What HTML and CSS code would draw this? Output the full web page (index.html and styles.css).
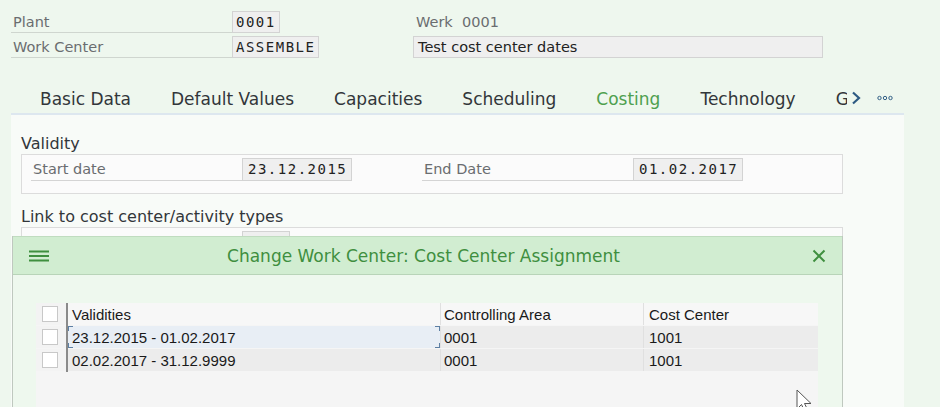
FILE: index.html
```html
<!DOCTYPE html>
<html lang="en">
<head>
    <meta charset="UTF-8">
    <meta name="viewport" content="width=device-width, initial-scale=1.0">
    <title>Work Center - Costing</title>
    <link rel="stylesheet" href="styles.css">
</head>
<body>
    <div class="page">
        <div class="head-grid">
            <div class="label">Plant</div>
            <div class="cell"><span class="field mono">0001</span></div>
            <div class="desc-text">Werk&nbsp; 0001</div>

            <div class="label">Work Center</div>
            <div class="cell"><span class="field mono">ASSEMBLE</span></div>
            <div class="field desc">Test cost center dates</div>
        </div>

        <div class="tabbar">
            <span class="tab">Basic Data</span>
            <span class="tab">Default Values</span>
            <span class="tab">Capacities</span>
            <span class="tab">Scheduling</span>
            <span class="tab active">Costing</span>
            <span class="tab">Technology</span>
            <span class="tab cut">G</span>
            <span class="tab-more">
                <svg width="10" height="14" viewBox="0 0 10 14"><path d="M2 1.5 L8 7 L2 12.5" fill="none" stroke="#2d5a82" stroke-width="2.2"/></svg>
                <svg width="16" height="6" viewBox="0 0 16 6"><circle cx="2.5" cy="3" r="1.7" fill="none" stroke="#346187" stroke-width="1"/><circle cx="8" cy="3" r="1.7" fill="none" stroke="#346187" stroke-width="1"/><circle cx="13.5" cy="3" r="1.7" fill="none" stroke="#346187" stroke-width="1"/></svg>
            </span>
        </div>

        <div class="panel">
            <div class="group-title">Validity</div>
            <div class="group">
                <div class="row">
                    <div class="row-label">Start date</div>
                    <span class="field mono date">23.12.2015</span>
                    <div class="row-label second">End Date</div>
                    <span class="field mono date">01.02.2017</span>
                </div>
            </div>

            <div class="group-title">Link to cost center/activity types</div>
            <div class="group">
                <div class="row">
                    <div class="row-label"></div>
                    <span class="field small"></span>
                </div>
            </div>
        </div>

        <div class="dialog">
            <div class="dialog-head">
                <svg class="burger" width="20" height="14" viewBox="0 0 20 14"><path d="M0 2.5h20M0 7h20M0 11.5h20" stroke="#3f8f3f" stroke-width="2"/></svg>
                <div class="dialog-title">Change Work Center: Cost Center Assignment</div>
                <svg class="close" width="14" height="14" viewBox="0 0 14 14"><path d="M1.5 1.5 L12.5 12.5 M12.5 1.5 L1.5 12.5" stroke="#3f8f3f" stroke-width="2"/></svg>
            </div>
            <div class="dialog-body">
                <table class="grid">
                    <thead>
                        <tr>
                            <th class="sel"><span class="check"></span></th>
                            <th class="c1">Validities</th>
                            <th class="c2">Controlling Area</th>
                            <th class="c3">Cost Center</th>
                        </tr>
                    </thead>
                    <tbody>
                        <tr>
                            <td class="sel"><span class="check"></span></td>
                            <td class="c1 focus">23.12.2015 - 01.02.2017</td>
                            <td class="c2">0001</td>
                            <td class="c3">1001</td>
                        </tr>
                        <tr>
                            <td class="sel"><span class="check"></span></td>
                            <td class="c1">02.02.2017 - 31.12.9999</td>
                            <td class="c2">0001</td>
                            <td class="c3">1001</td>
                        </tr>
                        <tr class="empty">
                            <td colspan="4"></td>
                        </tr>
                    </tbody>
                </table>
            </div>
        </div>

        <svg class="cursor" width="20" height="26" viewBox="0 0 20 26"><path d="M1 1 L1 20 L5.5 15.5 L9 23 L12 21.5 L8.5 14.5 L15 14.5 Z" fill="#fff" stroke="#555" stroke-width="1"/></svg>
    </div>
</body>
</html>
```

FILE: styles.css
```css
html, body {
    margin: 0;
    height: 100%;
    overflow: hidden;
}

body {
    font-family: "DejaVu Sans", "Open Sans", sans-serif;
    background-color: #eef7ee;
    color: #32363a;
}

.page {
    position: relative;
    height: 100%;
    padding-top: 11px;
    box-sizing: border-box;
}

.head-grid {
    display: grid;
    grid-template-columns: 221px 181px 410px;
    grid-auto-rows: 22px;
    row-gap: 3px;
    margin-left: 11px;
}

.label {
    font-size: 14.5px;
    color: #6a6d70;
    padding-left: 2px;
    line-height: 23px;
    border-bottom: 1px solid #cfd6cf;
}

.cell {
    display: flex;
}

.field {
    display: inline-block;
    box-sizing: border-box;
    height: 22px;
    line-height: 20px;
    padding: 0 3px;
    background-color: #efefef;
    border: 1px solid #d3d3d3;
    color: #222;
}

.mono {
    font-family: "DejaVu Sans Mono", monospace;
    font-size: 14px;
    letter-spacing: 1.5px;
}

.desc-text {
    font-size: 14.5px;
    color: #6a6d70;
    padding-left: 3px;
    line-height: 23px;
}

.desc {
    font-size: 14.5px;
    padding-left: 4px;
    line-height: 21px;
    color: #222;
}

/* tabs */
.tabbar {
    display: flex;
    align-items: flex-end;
    gap: 40px;
    margin: 26px 36px 0 11px;
    padding-left: 29px;
    height: 29px;
    border-bottom: 2px solid #dde7ef;
    font-size: 17px;
    white-space: nowrap;
    overflow: hidden;
}

.tab {
    line-height: 23px;
    padding-bottom: 2px;
    margin-bottom: -2px;
    border-bottom: 2px solid transparent;
    color: #32363a;
}

.tab.active {
    color: #4ea04e;
    border-bottom-color: #346187;
}

.tab.cut {
    width: 11px;
    overflow: hidden;
}

.tab-more {
    display: flex;
    align-items: center;
    gap: 16px;
    margin-left: -36px;
    height: 26px;
    padding-bottom: 2px;
}

/* content panel */
.panel {
    background-color: #f8fbf8;
    margin: 0 36px 0 11px;
    padding: 19px 10px 0 10px;
    height: 300px;
}

.group-title {
    font-size: 16px;
    line-height: 20px;
    color: #32363a;
}

.group {
    width: 822px;
    box-sizing: border-box;
    height: 40px;
    border: 1px solid #dcdcdc;
    background-color: #fbfbfb;
    padding: 3px 0 0 9px;
    margin-bottom: 13px;
}

.row {
    display: flex;
}

.row-label {
    width: 211px;
    height: 23px;
    box-sizing: border-box;
    border-bottom: 1px solid #d4d4d4;
    font-size: 14.5px;
    line-height: 22px;
    padding-left: 2px;
    color: #6a6d70;
}

.row-label.second {
    margin-left: 70px;
}

.date {
    width: 110px;
    height: 23px;
    padding-left: 5px;
}

.field.small {
    width: 48px;
    height: 30px;
}

/* dialog */
.dialog {
    position: absolute;
    left: 12px;
    top: 236px;
    width: 831px;
    height: 200px;
    box-sizing: border-box;
    border: 1px solid #bfc8bf;
    border-top: none;
    background-color: #eef8ee;
}

.dialog-head {
    display: flex;
    align-items: center;
    height: 37px;
    padding: 0 16px 0 16px;
    background-color: #d1edd1;
    border-bottom: 1px solid #b8d4b8;
    border-top: 1px solid #c0dcc0;
}

.dialog-title {
    flex: 1;
    text-align: center;
    font-size: 17px;
    color: #3f8f3f;
    padding-right: 14px;
}

.dialog-body {
    padding: 28px 0 0 23px;
}

.grid {
    width: 782px;
    border-collapse: collapse;
    font-family: "Liberation Sans", Arial, sans-serif;
    font-size: 15px;
    color: #1a1a1a;
    background-color: #f5f5f5;
}

.grid th,
.grid td {
    height: 22px;
    padding: 0 0 0 5px;
    text-align: left;
    font-weight: normal;
    border-bottom: 1px solid #f5f5f5;
}

.grid th {
    background-color: #f7f7f7;
}

.grid td {
    background-color: #ececec;
}

.grid .sel {
    width: 24px;
    padding-left: 6px;
    border-right: 2px solid #8a8a8a;
    background-color: #f3f3f3;
}

.grid .c1 {
    width: 368px;
    padding-left: 4px;
    border-right: 1px solid #e0e0e0;
}

.grid .c2 {
    width: 199px;
    padding-left: 3px;
    border-right: 1px solid #e0e0e0;
}

.grid .c3 {
    padding-left: 5px;
}

.check {
    display: block;
    width: 14px;
    height: 14px;
    background-color: #fff;
    border: 1px solid #c8c8c8;
}

.grid td.focus {
    background:
        linear-gradient(#5d7fa3, #5d7fa3) left top / 5px 1px no-repeat,
        linear-gradient(#5d7fa3, #5d7fa3) left top / 1px 5px no-repeat,
        linear-gradient(#5d7fa3, #5d7fa3) right top / 5px 1px no-repeat,
        linear-gradient(#5d7fa3, #5d7fa3) right top / 1px 5px no-repeat,
        linear-gradient(#5d7fa3, #5d7fa3) left bottom / 5px 1px no-repeat,
        linear-gradient(#5d7fa3, #5d7fa3) left bottom / 1px 5px no-repeat,
        linear-gradient(#5d7fa3, #5d7fa3) right bottom / 5px 1px no-repeat,
        linear-gradient(#5d7fa3, #5d7fa3) right bottom / 1px 5px no-repeat,
        #e8eef5;
}

.grid tr.empty td {
    height: 60px;
    background-color: #f5f5f5;
}

.cursor {
    position: absolute;
    left: 796px;
    top: 389px;
}
```
